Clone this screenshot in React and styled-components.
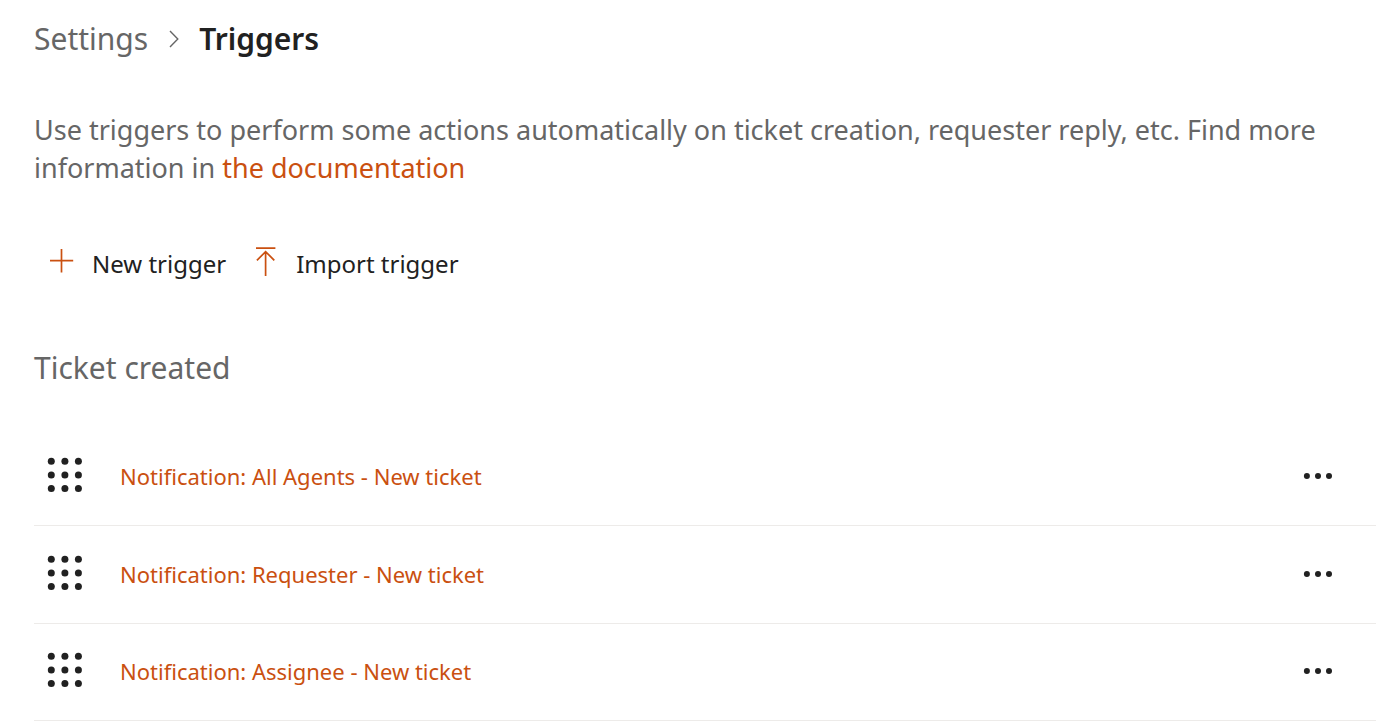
import React from 'react';
import styled, { createGlobalStyle } from 'styled-components';

const GlobalStyle = createGlobalStyle`
  * {
    box-sizing: border-box;
  }

  body {
    margin: 0;
    background: #fff;
    color: #212121;
    font-family: "Noto Sans", "Open Sans", sans-serif;
  }
`;

const Page = styled.main`
  padding: 15px 0 0 34px;
`;

const Breadcrumb = styled.nav`
  display: flex;
  align-items: center;
  gap: 20px;
  height: 48px;
  font-size: 30px;
  line-height: 48px;
`;

const Crumb = styled.a`
  color: #666;
  text-decoration: none;
`;

const Current = styled.h1`
  margin: 0;
  font-size: 30px;
  font-weight: 600;
`;

const Intro = styled.p`
  margin: 48px 48px 0 0;
  color: #666;
  font-size: 27px;
  line-height: 38px;
`;

const Link = styled.a`
  color: #ca5010;
  text-decoration: none;
`;

const Toolbar = styled.div`
  display: flex;
  gap: 14px;
  margin-top: 32px;
  padding-left: 8px;
`;

const ToolbarButton = styled.button`
  display: flex;
  align-items: center;
  gap: 18px;
  height: 88px;
  padding: 0 8px;
  border: 0;
  background: transparent;
  color: #212121;
  font-family: inherit;
  font-size: 24px;

  svg {
    color: #ca5010;
  }
`;

const SectionTitle = styled.h2`
  margin: 37px 0 0;
  color: #666;
  font-size: 30px;
  font-weight: 400;
  line-height: 48px;
`;

const List = styled.ul`
  margin: 36px 0 0;
  padding: 0;
  list-style: none;
`;

const Row = styled.li`
  display: flex;
  align-items: center;
  height: 98px;
  padding: 0 40px 2px 8px;
  border-bottom: 1px solid #edebe9;
  font-size: 22px;

  &:last-child {
    height: 97px;
  }
`;

const IconButton = styled.button`
  display: flex;
  padding: 4px;
  border: 0;
  background: transparent;
  color: #212121;
`;

const RowName = styled(Link)`
  flex: 1;
  margin-left: 32px;
`;

const triggers = [
  'Notification: All Agents - New ticket',
  'Notification: Requester - New ticket',
  'Notification: Assignee - New ticket',
];

const ChevronIcon = () => (
  <svg width="11" height="18" viewBox="0 0 11 18" fill="none" stroke="#666" strokeWidth="1.4" aria-hidden="true">
    <path d="M2 1l7.8 8L2 17" />
  </svg>
);

const PlusIcon = () => (
  <svg width="24" height="32" viewBox="0 0 24 32" fill="none" stroke="currentColor" strokeWidth="1.7" aria-hidden="true">
    <path d="M11.5 2v23.4M0 13.7h23.2" />
  </svg>
);

const ImportIcon = () => (
  <svg width="22" height="32" viewBox="0 0 22 32" fill="none" stroke="currentColor" strokeWidth="1.7" aria-hidden="true">
    <path d="M0 1.2h19.4M9.6 29V5M.9 13.4l8.7-8.8 8.7 8.8" />
  </svg>
);

const GripIcon = () => (
  <svg width="38" height="40" viewBox="0 0 38 40" fill="currentColor" aria-hidden="true">
    {[5.3, 18.9, 32.4].map((y) =>
      [5.3, 18.9, 32.4].map((x) => <circle key={`${x}-${y}`} cx={x} cy={y} r="3.5" />)
    )}
  </svg>
);

const MoreIcon = () => (
  <svg width="30" height="8" viewBox="0 0 30 8" fill="currentColor" aria-hidden="true">
    {[4.9, 16, 27].map((x) => <circle key={x} cx={x} cy="4" r="3" />)}
  </svg>
);

export const App = () => (
  <>
    <GlobalStyle />
    <Page>
      <Breadcrumb aria-label="Breadcrumb">
        <Crumb href="#settings">Settings</Crumb>
        <ChevronIcon />
        <Current>Triggers</Current>
      </Breadcrumb>
      <Intro>
        Use triggers to perform some actions automatically on ticket creation, requester reply, etc.
        Find more information in <Link href="#documentation">the documentation</Link>
      </Intro>
      <Toolbar>
        <ToolbarButton type="button">
          <PlusIcon />
          New trigger
        </ToolbarButton>
        <ToolbarButton type="button">
          <ImportIcon />
          Import trigger
        </ToolbarButton>
      </Toolbar>
      <SectionTitle>Ticket created</SectionTitle>
      <List>
        {triggers.map((name) => (
          <Row key={name}>
            <IconButton type="button" aria-label={`Reorder ${name}`}>
              <GripIcon />
            </IconButton>
            <RowName href="#trigger">{name}</RowName>
            <IconButton type="button" aria-label={`More actions for ${name}`}>
              <MoreIcon />
            </IconButton>
          </Row>
        ))}
      </List>
    </Page>
  </>
);

export default App;
